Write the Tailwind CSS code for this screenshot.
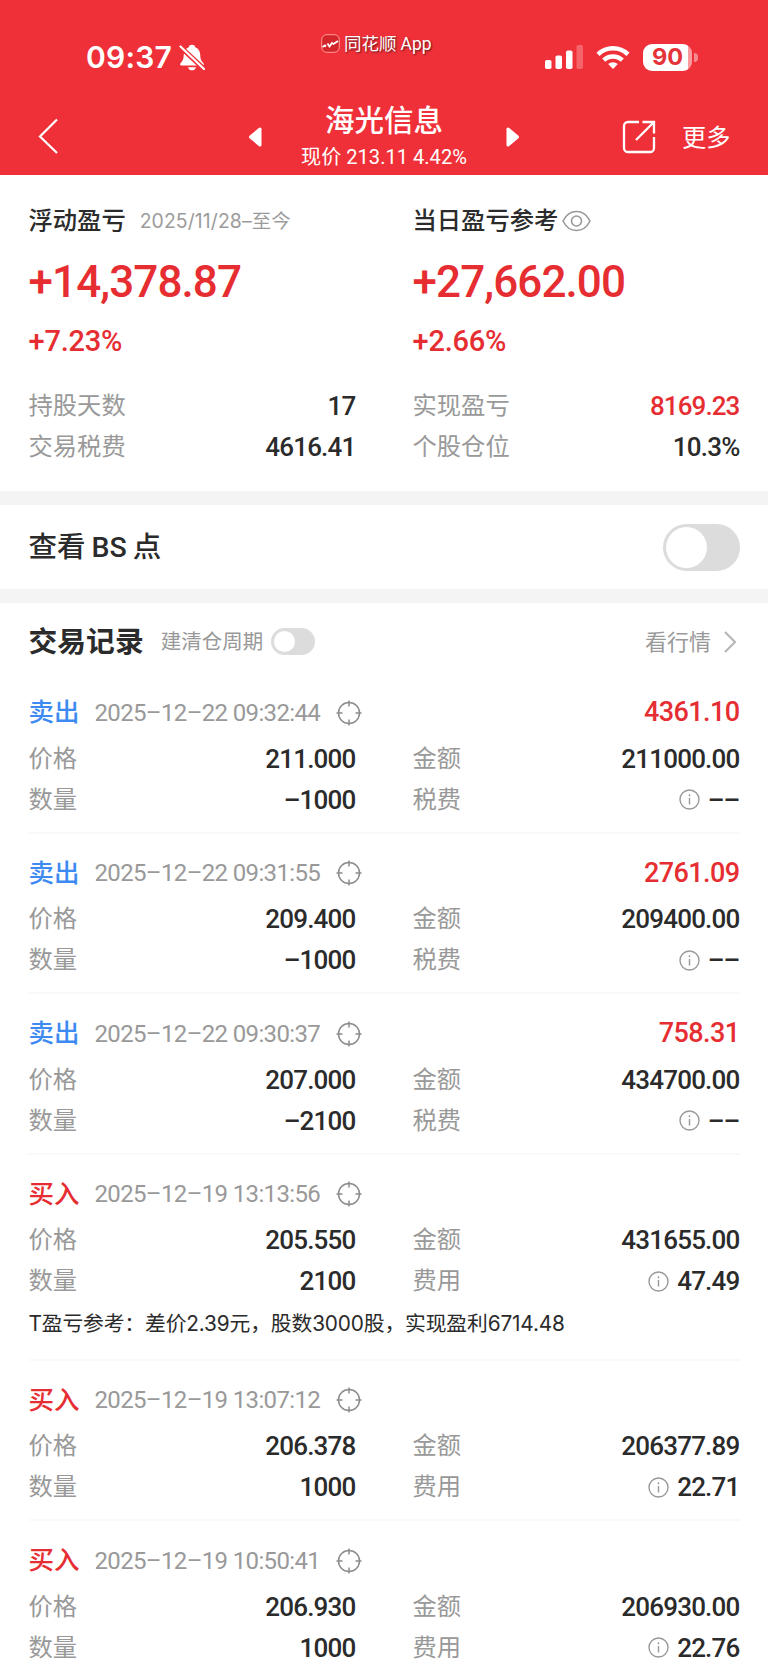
<!DOCTYPE html>
<html lang="zh-CN">
<head>
  <meta charset="UTF-8" />
  <meta name="viewport" content="width=device-width, initial-scale=1" />
  <title>海光信息</title>
  <script src="https://cdn.jsdelivr.net/npm/@tailwindcss/browser@4"></script>
</head>
<body class="bg-white text-[#2b2b2b] font-['Roboto','Noto_Sans_CJK_SC',sans-serif] w-[768px] h-[1669px] overflow-hidden">

  <header class="relative h-[175px] bg-[#f03038] text-white">
    <!-- Statusleiste -->
    <div class="flex items-center h-[114px] pl-[86px] pr-[70px]">
      <span class="font-['Inter'] font-semibold text-[30px] tracking-[0.2px] leading-none w-[93px] whitespace-nowrap">09:37</span>
      <svg class="w-[26px] h-[27px]" viewBox="0 0 26 27" fill="#fff">
        <path d="M13 .8c-2 0-3 1-3.300 2.400C6.300 4.500 5 7.200 4.800 10.500c-.2 4.300-.8 6.200-2.900 8.200-1.300 1.300-1 2.800.8 2.800h20.600c1.800 0 2.100-1.500.8-2.800-2.100-2-2.700-3.900-2.900-8.200-.2-3.300-1.500-6-4.900-7.300C16 1.800 15 .8 13 .8zM9 23.200h8c-.5 2-2 3.100-4 3.100s-3.500-1.100-4-3.100z"/>
        <path d="M1 2.500 25 25" stroke="#f03038" stroke-width="5"/>
        <path d="M1.500 2.500 25 25" stroke="#fff" stroke-width="2.200" stroke-linecap="round"/>
      </svg>
      <div class="ml-auto flex items-center">
        <svg class="w-[38px] h-6" viewBox="0 0 38 24" fill="#fff">
          <rect x="0" y="15" width="6.500" height="9" rx="1.800"/>
          <rect x="10.500" y="10.500" width="6.500" height="13.500" rx="1.800"/>
          <rect x="21" y="5.500" width="6.500" height="18.500" rx="1.800"/>
          <rect x="31.500" y="0" width="6.500" height="24" rx="1.800" opacity=".25"/>
        </svg>
        <svg class="ml-[13px] w-[34px] h-6" viewBox="0 0 34 24" fill="none" stroke="#fff" stroke-width="4.400">
          <path d="M2 9.300a21.500 21.500 0 0 1 30 0"/>
          <path d="M7.700 15.200a13.400 13.400 0 0 1 18.600 0"/>
          <path d="M17 24l-4.800-4.900a7 7 0 0 1 9.600 0z" fill="#fff" stroke="none"/>
        </svg>
        <div class="ml-[13px] w-[49px] h-[27px] rounded-[9px] bg-linear-to-r from-white from-[91%] to-[#f99a9e] to-[91%] text-[#e5333a] flex items-center justify-center font-['Inter'] font-bold text-[23.500px] leading-none">90</div>
        <div class="ml-[2px] w-[4px] h-[9px] rounded-r-full bg-[#f78a8f]"></div>
      </div>
    </div>
    <!-- Wasserzeichen -->
    <div class="absolute left-[321px] top-[31px] flex items-center gap-[4px] h-6 text-[17.500px] leading-none text-shadow-[1px_1px_2px_rgb(0_0_0/0.6)]">
      <svg class="w-[19px] h-[19px]" viewBox="0 0 19 19" fill="none" stroke="#fff">
        <rect x=".7" y=".7" width="17.600" height="17.600" rx="5" stroke="#ff9b98" fill="#d3262b"/>
        <path d="M1.500 13l2.500-1.500 1 1M6.500 9.500l2 3 2.500-3.500 1.500 1 4.500-3" stroke-width="1.800"/>
      </svg>
      <span class="whitespace-nowrap mt-[3px]">同花顺<span class="ml-[4px]">App</span></span>
    </div>
    <!-- Titelleiste -->
    <div class="absolute left-0 top-[100px] w-full h-[75px] flex">
      <svg class="ml-[38px] mt-[18px] w-5 h-[36px]" viewBox="0 0 20 36" fill="none" stroke="#fff" stroke-width="2.200"><path d="M19 1.500 2 18.500 19 35"/></svg>
      <svg class="ml-[190px] mt-[26px] w-[15px] h-[22px]" viewBox="0 0 15 22" fill="#fff" stroke="#fff" stroke-width="3" stroke-linejoin="round"><path d="M12 3v16L2.500 11z"/></svg>
      <div class="w-[242px] flex flex-col items-center">
        <h1 class="text-[29.500px] font-medium leading-[42px] whitespace-nowrap">海光信息</h1>
        <p class="text-[20.100px] leading-[31px] whitespace-nowrap">现价 213.11 4.42%</p>
      </div>
      <svg class="mt-[26px] w-[15px] h-[22px]" viewBox="0 0 15 22" fill="#fff" stroke="#fff" stroke-width="3" stroke-linejoin="round"><path d="M3 3v16l9.500-8z"/></svg>
      <svg class="ml-[102px] mt-[20px] w-[34px] h-[34px]" viewBox="0 0 34 34" fill="none" stroke="#fff" stroke-width="2.300">
        <path d="M17 2H6a4 4 0 0 0-4 4v22a4 4 0 0 0 4 4h22a4 4 0 0 0 4-4V17M20.500 2H32v11.500M32 2 14 20"/>
      </svg>
      <span class="ml-[26px] mt-[18px] text-[24.300px] leading-[40px] whitespace-nowrap">更多</span>
    </div>
  </header>

  <!-- Gewinnübersicht -->
  <section class="grid grid-cols-[327px_327px] gap-x-[57px] pl-[28.500px] pt-[26px] h-[316px]">
    <div>
      <div class="flex items-center h-[41px]">
        <span class="text-[24.300px] font-medium">浮动盈亏</span>
        <span class="ml-[14px] text-[19.400px] tracking-[0.1px] text-[#9b9b9b] font-['Inter','Noto_Sans_CJK_SC'] whitespace-nowrap">2025/11/28–至今</span>
      </div>
      <div class="h-[80px] flex items-center font-medium text-[44px] text-[#e62e32] tracking-[-0.9px]">+14,378.87</div>
      <div class="h-[40px] flex items-center font-medium text-[29px] text-[#e62e32] tracking-[-0.2px]">+7.23%</div>
      <div class="mt-[24px] flex items-center justify-between h-[41px]">
        <span class="text-[24.300px] text-[#999]">持股天数</span>
        <span class="font-medium text-[26px] tracking-[-0.8px]">17</span>
      </div>
      <div class="flex items-center justify-between h-[41px]">
        <span class="text-[24.300px] text-[#999]">交易税费</span>
        <span class="font-medium text-[26px] tracking-[-0.8px]">4616.41</span>
      </div>
    </div>
    <div>
      <div class="flex items-center h-[41px]">
        <span class="text-[24.300px] font-medium">当日盈亏参考</span>
        <svg class="ml-[4px] mb-[2px] w-[29px] h-[22px]" viewBox="0 0 29 22" fill="none" stroke="#999" stroke-width="1.600"><path d="M1 11C4 5 8.500 1.500 14.500 1.500S25 5 28 11c-3 6-7.500 9.500-13.500 9.500S4 17 1 11z"/><circle cx="14.500" cy="11" r="5"/></svg>
      </div>
      <div class="h-[80px] flex items-center font-medium text-[44px] text-[#e62e32] tracking-[-0.9px]">+27,662.00</div>
      <div class="h-[40px] flex items-center font-medium text-[29px] text-[#e62e32] tracking-[-0.2px]">+2.66%</div>
      <div class="mt-[24px] flex items-center justify-between h-[41px]">
        <span class="text-[24.300px] text-[#999]">实现盈亏</span>
        <span class="font-medium text-[26px] tracking-[-0.9px] text-[#e62e32]">8169.23</span>
      </div>
      <div class="flex items-center justify-between h-[41px]">
        <span class="text-[24.300px] text-[#999]">个股仓位</span>
        <span class="font-medium text-[26px] tracking-[-0.8px]">10.3%</span>
      </div>
    </div>
  </section>

  <section class="h-[112px] border-y-[14px] border-[#f4f4f4] flex items-center justify-between pl-[28.500px] pr-7 box-border">
    <span class="text-[28.500px] font-medium pt-[3px]">查看<span class="mx-[6px]">BS</span>点</span>
    <div class="w-[77px] h-[47px] rounded-full bg-[#dcdcdc] p-[3px]"><div class="w-[41px] h-[41px] rounded-full bg-white"></div></div>
  </section>

  <section class="pl-[28.500px] pr-7">
    <div class="flex items-center h-[78px] mb-[-8px]">
      <h2 class="text-[28.800px] font-bold pt-[2px]">交易记录</h2>
      <span class="ml-[17px] text-[20.500px] text-[#999]">建清仓周期</span>
      <div class="ml-[8px] mb-[1px] w-[44px] h-[27px] rounded-full bg-[#dcdcdc] p-[3px]"><div class="w-[21px] h-[21px] rounded-full bg-white"></div></div>
      <span class="ml-auto text-[22px] text-[#999]">看行情</span>
      <svg class="ml-[13px] mr-[4px] mb-[1px] w-3 h-[22px]" viewBox="0 0 12 22" fill="none" stroke="#b5b5b5" stroke-width="2"><path d="M1 1l10 10L1 21"/></svg>
    </div>
    <div id="trades"></div>
  </section>

  <script>
    const trades = [
      { side: '卖出', time: '2025–12–22 09:32:44', profit: '4361.10', price: '211.000', qty: '–1000', amount: '211000.00', fee: '––' },
      { side: '卖出', time: '2025–12–22 09:31:55', profit: '2761.09', price: '209.400', qty: '–1000', amount: '209400.00', fee: '––' },
      { side: '卖出', time: '2025–12–22 09:30:37', profit: '758.31', price: '207.000', qty: '–2100', amount: '434700.00', fee: '––' },
      { side: '买入', time: '2025–12–19 13:13:56', price: '205.550', qty: '2100', amount: '431655.00', fee: '47.49', note: 'T盈亏参考：差价2.39元，股数3000股，实现盈利6714.48' },
      { side: '买入', time: '2025–12–19 13:07:12', price: '206.378', qty: '1000', amount: '206377.89', fee: '22.71' },
      { side: '买入', time: '2025–12–19 10:50:41', price: '206.930', qty: '1000', amount: '206930.00', fee: '22.76' }
    ];

    const target = `<svg class="ml-[15px] w-[26px] h-[26px]" viewBox="0 0 26 26" fill="none" stroke="#8c8c8c" stroke-width="1.500"><circle cx="13" cy="13" r="10.500"/><path d="M13 .5v6M13 19.500v6M.5 13h6M19.500 13h6"/></svg>`;
    const info = `<svg class="mr-[8px] mb-[1px] w-[21px] h-[21px]" viewBox="0 0 21 21" fill="none" stroke="#999" stroke-width="1.400"><circle cx="10.500" cy="10.500" r="9.500"/><path d="M10.500 9v6.500M10.500 5.300v2"/></svg>`;

    function cell(label, value, icon = '') {
      return `
        <div class="flex items-center h-[41px]">
          <span class="text-[24.300px] text-[#999] mr-auto">${label}</span>
          ${icon}
          <span class="font-medium text-[26px] tracking-[-0.8px]">${value}</span>
        </div>`;
    }

    document.getElementById('trades').innerHTML = trades.map(t => {
      const sell = t.side === '卖出';
      return `
        <div class="${t.note ? 'h-[206px]' : 'h-[160.500px]'} border-b-2 border-[#f9f9f9] pt-[16.500px] w-[711px]">
          <div class="flex items-center h-[46px] mb-[3px]">
            <span class="text-[25.500px] font-medium ${sell ? 'text-[#3d8bf2]' : 'text-[#e62e32]'}">${t.side}</span>
            <span class="ml-[15px] text-[24px] tracking-[-0.65px] text-[#999] w-[226px] whitespace-nowrap">${t.time}</span>
            ${target}
            <span class="ml-auto font-medium text-[27px] tracking-[-0.6px] text-[#e62e32]">${t.profit ?? ''}</span>
          </div>
          <div class="grid grid-cols-[327px_327px] gap-x-[57px]">
            ${cell('价格', t.price)}
            ${cell('金额', t.amount)}
            ${cell('数量', t.qty)}
            ${cell(sell ? '税费' : '费用', t.fee, info)}
          </div>
          ${t.note ? `<p class="text-[20.800px] leading-[44px] tracking-[-0.15px] whitespace-nowrap font-['Inter','Noto_Sans_CJK_SC']">${t.note}</p>` : ''}
        </div>`;
    }).join('');
  </script>
</body>
</html>
